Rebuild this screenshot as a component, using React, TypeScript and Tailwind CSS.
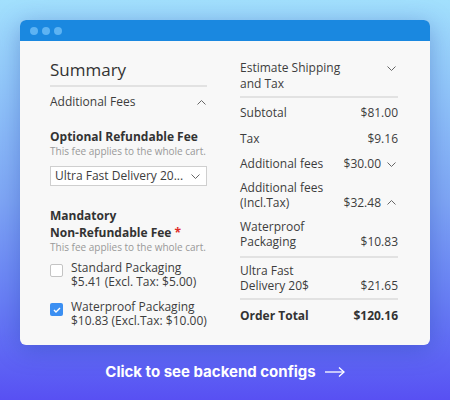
import type { ReactNode } from 'react';

function Chevron({ up = false, className = '' }: { up?: boolean; className?: string }) {
  return (
    <svg width="9" height="5" viewBox="0 0 9 5" className={className}>
      <polyline
        points={up ? '0.5,4.5 4.5,0.5 8.5,4.5' : '0.5,0.5 4.5,4.5 8.5,0.5'}
        fill="none"
        stroke="#666"
        strokeWidth="1"
      />
    </svg>
  );
}

function Checkbox({ checked }: { checked?: boolean }) {
  if (checked) {
    return (
      <div className="w-[13px] h-[13px] rounded-[2px] bg-[#3b8ff2] flex items-center justify-center shrink-0 mt-[3px]">
        <svg width="8" height="6" viewBox="0 0 8 6">
          <polyline points="1,3 3,5 7,1" fill="none" stroke="#fff" strokeWidth="1.4" />
        </svg>
      </div>
    );
  }
  return <div className="w-[13px] h-[13px] rounded-[2px] bg-white border border-[#c4c4c4] shrink-0 mt-[3px]" />;
}

function Row({ label, value, className = '', children }: { label: ReactNode; value: ReactNode; className?: string; children?: ReactNode }) {
  return (
    <div className={`flex justify-between items-end ${className}`}>
      <div>{label}</div>
      <div className="flex items-center gap-[6px]">
        {value}
        {children}
      </div>
    </div>
  );
}

export default function App() {
  return (
    <div
      className="w-[450px] h-[400px] bg-linear-to-b from-[#a2e0fd] via-[#7fa6f5] to-[#5850f3] pt-[20px] px-[20px]"
      style={{ fontFamily: '"Open Sans", sans-serif' }}
    >
      <div className="w-[410px] h-[325px] rounded-[6px] overflow-hidden bg-[#f8f8f8] shadow-[0_4px_24px_rgba(30,60,160,0.35)]">
        <div className="h-[21px] bg-[#1a88e0] flex items-center gap-[4px] pl-[10px]">
          <span className="w-[8px] h-[8px] rounded-full bg-[#5db3f3]" />
          <span className="w-[8px] h-[8px] rounded-full bg-[#5db3f3]" />
          <span className="w-[8px] h-[8px] rounded-full bg-[#5db3f3]" />
        </div>

        <div className="flex pl-[30px] text-[#3d3d3d]">
          {/* left column */}
          <div className="w-[157px] pt-[17px]">
            <div className="text-[17px] leading-[24px] text-[#333]">Summary</div>
            <div className="mt-[3px] h-[2px] bg-[#e2e2e2]" />
            <div className="mt-[7px] flex justify-between items-center text-[12px] leading-[16px]">
              <span>Additional Fees</span>
              <Chevron up className="mr-[1px]" />
            </div>

            <div className="mt-[19px] text-[12px] leading-[16px] font-bold text-[#333]">Optional Refundable Fee</div>
            <div className="text-[10px] leading-[13px] text-[#999] whitespace-nowrap">This fee applies to the whole cart.</div>
            <div className="mt-[8px] h-[20px] border border-[#cfcfcf] bg-white flex items-center justify-between pl-[4px] pr-[6px] text-[12px]">
              <span>Ultra Fast Delivery 20...</span>
              <Chevron />
            </div>

            <div className="mt-[21px] text-[12px] leading-[17px] font-bold text-[#333]">
              Mandatory
              <br />
              Non-Refundable Fee <span className="text-[#e02b27]">*</span>
            </div>
            <div className="text-[10px] leading-[13px] text-[#999] whitespace-nowrap">This fee applies to the whole cart.</div>

            <div className="mt-[7px] flex gap-[8px] text-[12px] leading-[14px] whitespace-nowrap">
              <Checkbox />
              <div>
                Standard Packaging
                <br />
                $5.41 (Excl. Tax: $5.00)
              </div>
            </div>
            <div className="mt-[11px] flex gap-[8px] text-[12px] leading-[14px] whitespace-nowrap">
              <Checkbox checked />
              <div>
                Waterproof Packaging
                <br />
                $10.83 (Excl.Tax: $10.00)
              </div>
            </div>
          </div>

          {/* right column */}
          <div className="w-[158px] ml-[33px] pt-[19px] text-[12px]">
            <div className="flex justify-between items-start leading-[16px]">
              <div>
                Estimate Shipping
                <br />
                and Tax
              </div>
              <Chevron className="mt-[6px] mr-[2px]" />
            </div>
            <div className="mt-[4px] h-[2px] bg-[#e2e2e2]" />

            <Row className="mt-[7px] leading-[16px]" label="Subtotal" value="$81.00" />
            <Row className="mt-[10px] leading-[16px]" label="Tax" value="$9.16" />
            <Row className="mt-[9px] leading-[16px]" label="Additional fees" value="$30.00">
              <Chevron className="mr-[2px]" />
            </Row>
            <Row
              className="mt-[8px] leading-[15px]"
              label={
                <>
                  Additional fees
                  <br />
                  (Incl.Tax)
                </>
              }
              value="$32.48"
            >
              <Chevron up className="mr-[2px]" />
            </Row>
            <Row
              className="mt-[9px] leading-[15px]"
              label={
                <>
                  Waterproof
                  <br />
                  Packaging
                </>
              }
              value="$10.83"
            />
            <div className="mt-[7px] h-[2px] bg-[#e2e2e2]" />
            <Row
              className="mt-[5px] leading-[15px]"
              label={
                <>
                  Ultra Fast
                  <br />
                  Delivery 20$
                </>
              }
              value="$21.65"
            />
            <div className="mt-[5px] h-[2px] bg-[#e2e2e2]" />
            <Row className="mt-[8px] leading-[16px] font-bold text-[#333]" label="Order Total" value="$120.16" />
          </div>
        </div>
      </div>

      <div
        className="mt-[17px] flex items-center justify-center gap-[9px] text-white text-[15px] leading-[20px] font-bold"
        style={{ fontFamily: 'Inter, sans-serif' }}
      >
        <span>Click to see backend configs</span>
        <svg width="20" height="10" viewBox="0 0 20 10">
          <line x1="0" y1="5" x2="19" y2="5" stroke="#fff" strokeWidth="1.3" />
          <polyline points="14,0.5 19,5 14,9.5" fill="none" stroke="#fff" strokeWidth="1.3" />
        </svg>
      </div>
    </div>
  );
}
